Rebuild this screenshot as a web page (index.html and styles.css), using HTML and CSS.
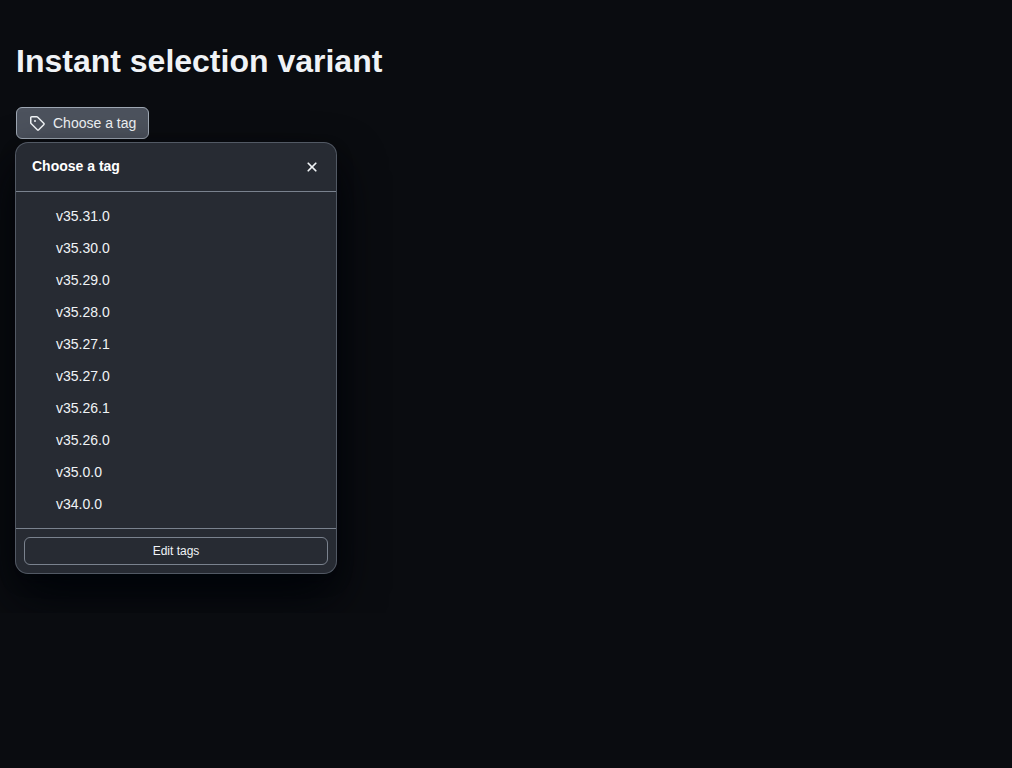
FILE: index.html
```html
<!DOCTYPE html>
<html lang="en">
<head>
<meta charset="utf-8">
<title>Instant selection variant</title>
<link rel="stylesheet" href="styles.css">
</head>
<body>
<main class="page">
  <h1 class="title">Instant selection variant</h1>
  <div class="picker">
    <button class="trigger" type="button" aria-haspopup="dialog" aria-expanded="true">
      <svg class="icon" viewBox="0 0 16 16" width="16" height="16" aria-hidden="true"><path d="M1 7.775V2.75C1 1.784 1.784 1 2.75 1h5.025c.464 0 .91.184 1.238.513l6.25 6.25a1.75 1.75 0 0 1 0 2.474l-5.026 5.026a1.75 1.75 0 0 1-2.474 0l-6.25-6.25A1.752 1.752 0 0 1 1 7.775Zm1.5 0c0 .066.026.13.073.177l6.25 6.25a.25.25 0 0 0 .354 0l5.025-5.025a.25.25 0 0 0 0-.354l-6.25-6.25a.25.25 0 0 0-.177-.073H2.75a.25.25 0 0 0-.25.25ZM6 5a1 1 0 1 1 0 2 1 1 0 0 1 0-2Z"/></svg>
      <span>Choose a tag</span>
    </button>
    <section class="panel" role="dialog" aria-labelledby="panel-title">
      <header class="panel-header">
        <h2 class="panel-title" id="panel-title">Choose a tag</h2>
        <button class="close" type="button" aria-label="Close">
          <svg class="icon close-icon" viewBox="0 0 16 16" width="16" height="16" aria-hidden="true"><path d="M3.72 3.72a.75.75 0 0 1 1.06 0L8 6.94l3.22-3.22a.75.75 0 1 1 1.06 1.06L9.06 8l3.22 3.22a.75.75 0 1 1-1.06 1.06L8 9.06l-3.22 3.22a.75.75 0 0 1-1.06-1.06L6.94 8 3.72 4.78a.75.75 0 0 1 0-1.06Z"/></svg>
        </button>
      </header>
      <ul class="list">
        <li><button class="item" type="button">v35.31.0</button></li>
        <li><button class="item" type="button">v35.30.0</button></li>
        <li><button class="item" type="button">v35.29.0</button></li>
        <li><button class="item" type="button">v35.28.0</button></li>
        <li><button class="item" type="button">v35.27.1</button></li>
        <li><button class="item" type="button">v35.27.0</button></li>
        <li><button class="item" type="button">v35.26.1</button></li>
        <li><button class="item" type="button">v35.26.0</button></li>
        <li><button class="item" type="button">v35.0.0</button></li>
        <li><button class="item" type="button">v34.0.0</button></li>
      </ul>
      <footer class="panel-footer">
        <button class="edit" type="button">Edit tags</button>
      </footer>
    </section>
  </div>
</main>
</body>
</html>
```

FILE: styles.css
```css
* { box-sizing: border-box; }

body {
  margin: 0;
  background: #0a0c10;
  color: #f0f3f6;
  font: 14px/20px "Liberation Sans", Arial, sans-serif;
}

.page { padding: 40px 16px; }

.title {
  margin: 0 0 24px;
  font-size: 32px;
  line-height: 43px;
}

.picker {
  display: flex;
  flex-direction: column;
  align-items: flex-start;
  gap: 4px;
}

button {
  color: inherit;
  font: inherit;
  cursor: pointer;
}

.icon {
  display: block;
  fill: currentColor;
}

.trigger {
  display: flex;
  align-items: center;
  gap: 8px;
  height: 32px;
  padding: 0 12px;
  border: 1px solid #9ea7b3;
  border-radius: 6px;
  background: #4c525d;
}

.panel {
  width: 320px;
  max-width: 100%;
  border-radius: 12px;
  background: #272b33;
  box-shadow: 0 0 0 1px #525964, 0 8px 16px rgba(1, 4, 9, 0.4), 0 24px 48px #010409;
}

.panel-header {
  display: flex;
  justify-content: space-between;
  padding: 8px 8px 8px 16px;
  border-bottom: 1px solid #7a828e;
}

.panel-title {
  margin: 0;
  padding: 5px 0;
  color: #ffffff;
  font-size: 14px;
  line-height: 20px;
}

.close {
  display: grid;
  place-items: center;
  width: 32px;
  height: 32px;
  padding: 0;
  border: 0;
  border-radius: 6px;
  background: transparent;
}

.close-icon {
  stroke: currentColor;
  stroke-width: 0.2;
}

.list {
  margin: 0;
  padding: 8px;
  list-style: none;
}

.item {
  display: block;
  width: 100%;
  padding: 6px 8px 6px 32px;
  border: 0;
  border-radius: 6px;
  background: transparent;
  text-align: left;
}

.panel-footer {
  padding: 8px;
  border-top: 1px solid #7a828e;
}

.edit {
  display: block;
  width: 100%;
  height: 28px;
  padding: 0 8px;
  border: 1px solid #7a828e;
  border-radius: 6px;
  background: #272b33;
  font-size: 12px;
}
```
